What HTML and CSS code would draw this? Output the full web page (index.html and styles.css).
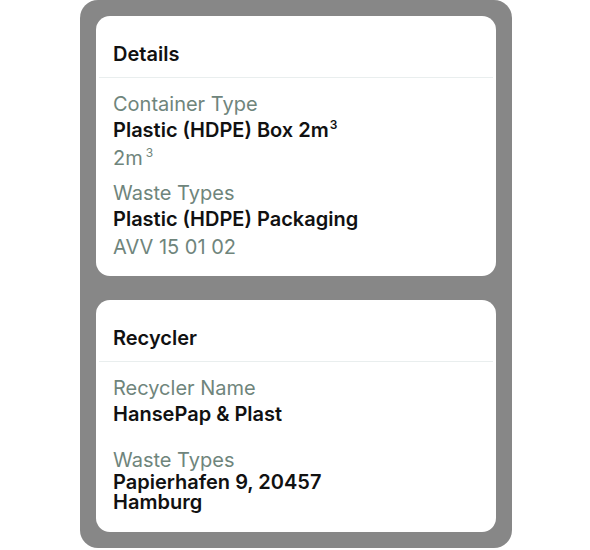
FILE: index.html
```html
<!DOCTYPE html>
<html>
<head>
<meta charset="utf-8">
<link rel="stylesheet" href="styles.css">
</head>
<body>
<div class="panel">
  <section class="card card-details">
    <div class="card-header">Details</div>
    <div class="card-body">
      <div class="field">
        <div class="label">Container Type</div>
        <div class="value"><span>Plastic (HDPE) Box 2m<sup class="sup">3</sup></span></div>
        <div class="sub">2m<sup class="sup sup-sub">3</sup></div>
      </div>
      <div class="field">
        <div class="label">Waste Types</div>
        <div class="value"><span>Plastic (HDPE) Packaging</span></div>
        <div class="sub">AVV 15 01 02</div>
      </div>
    </div>
  </section>
  <section class="card card-recycler">
    <div class="card-header">Recycler</div>
    <div class="card-body">
      <div class="field">
        <div class="label">Recycler Name</div>
        <div class="value"><span>HansePap &amp; Plast</span></div>
      </div>
      <div class="field">
        <div class="label">Waste Types</div>
        <div class="value value-multi"><span class="line">Papierhafen 9, 20457</span><span class="line">Hamburg</span></div>
      </div>
    </div>
  </section>
</div>
</body>
</html>
```
FILE: styles.css
```css
html, body {
  margin: 0;
  padding: 0;
  background: #ffffff;
}
body {
  font-family: Inter, "Noto Sans", sans-serif;
  color: #111111;
}
.panel {
  box-sizing: border-box;
  width: 432px;
  height: 548px;
  margin-left: 80px;
  padding: 16px;
  background: #878787;
  border-radius: 18px;
  display: flex;
  flex-direction: column;
  gap: 24px;
}
.card {
  background: #ffffff;
  border-radius: 14px;
  overflow: hidden;
}
.card-header {
  padding: 26px 14px 11px;
  margin: 0 3px;
  font-size: 20px;
  line-height: 24px;
  font-weight: 600;
  color: #111111;
  border-bottom: 1px solid #e9eeee;
}
.card-body {
  padding: 14px 17px 18px;
  display: flex;
  flex-direction: column;
}
.card-details .card-body {
  gap: 11px;
}
.card-recycler .card-body {
  gap: 20px;
  padding-bottom: 21px;
}
.field {
  display: flex;
  flex-direction: column;
}
.label {
  font-size: 20px;
  line-height: 24px;
  color: #6f857c;
}
.value {
  min-height: 28px;
  display: flex;
  flex-direction: column;
  justify-content: center;
  font-size: 20px;
  line-height: 20px;
  font-weight: 600;
  color: #111111;
}
.value-multi .line {
  display: block;
  height: 20px;
}
.sub {
  margin-top: 2px;
  font-size: 20px;
  line-height: 24px;
  color: #6f857c;
}
.sup {
  font-size: 12px;
  line-height: 0;
  vertical-align: 8px;
  margin-left: 1px;
}
.sup-sub {
  margin-left: 3px;
}
```
